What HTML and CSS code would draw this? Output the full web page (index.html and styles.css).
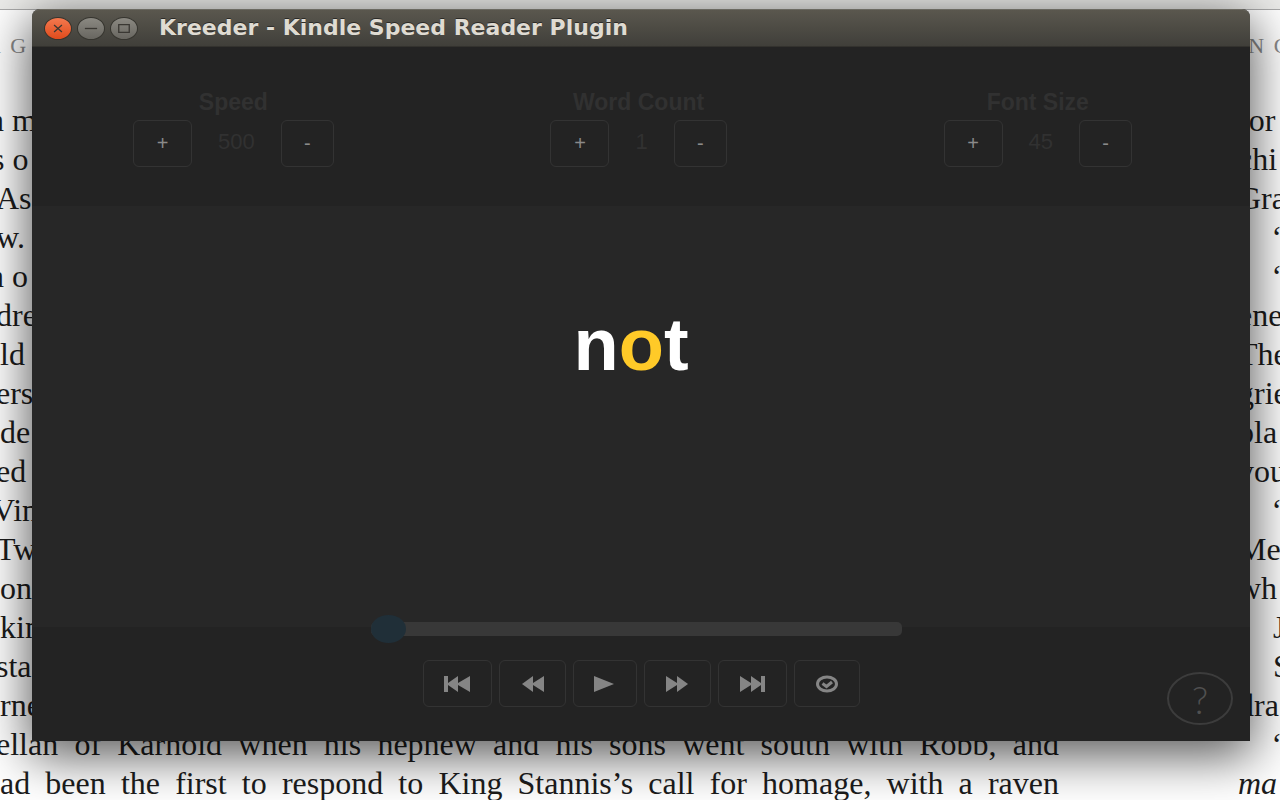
FILE: index.html
```html
<!DOCTYPE html>
<html lang="en">
<head>
<meta charset="utf-8">
<meta name="viewport" content="width=device-width, initial-scale=1">
<title>Kreeder - Kindle Speed Reader Plugin</title>
<link rel="stylesheet" href="styles.css">
</head>
<body>
<div class="desktop">
  <div class="book">
    <div class="page page-left">
      <p class="running-head">R G</p>
      <p class="in-3">n m</p>
      <p class="in-2">s o</p>
      <p class="in-1">As</p>
      <p class="in-1">w.</p>
      <p class="in-3">n o</p>
      <p class="in-1">dre</p>
      <p>ld</p>
      <p class="in-1">ers</p>
      <p>de</p>
      <p class="in-1">ed</p>
      <p class="in-2">Vin</p>
      <p class="in-1">Tw</p>
      <p>on</p>
      <p>kin</p>
      <p class="in-1">sta</p>
      <p>rne</p>
      <p class="full in-1">ellan of Karhold when his nephew and his sons went south with Robb, and</p>
      <p class="full">ad been the first to respond to King Stannis’s call for homage, with a raven</p>
    </div>
    <div class="page page-right">
      <p class="running-head">IN C</p>
      <p>for</p>
      <p>chi</p>
      <p>Gra</p>
      <p class="start">“</p>
      <p class="start">“</p>
      <p>ene</p>
      <p>The</p>
      <p>grie</p>
      <p>pla</p>
      <p>you</p>
      <p class="start">“</p>
      <p>Me</p>
      <p>wh</p>
      <p class="start">J</p>
      <p class="start">S</p>
      <p>dra</p>
      <p class="start">“</p>
      <p><em>ma</em></p>
    </div>
  </div>

  <main class="window">
    <header class="titlebar">
      <button class="wm wm-close" type="button" aria-label="Close"><svg viewBox="0 0 28 24"><path d="M9.500 8l9 8M18.500 8l-9 8"/></svg></button>
      <button class="wm" type="button" aria-label="Minimize"><svg viewBox="0 0 28 24"><path d="M7 12h14"/></svg></button>
      <button class="wm" type="button" aria-label="Maximize"><svg viewBox="0 0 28 24"><path d="M8 7.500h12v9H8z"/></svg></button>
      <h1>Kreeder - Kindle Speed Reader Plugin</h1>
    </header>

    <section class="settings">
      <div class="setting" role="group" aria-labelledby="speed">
        <h2 id="speed">Speed</h2>
        <div class="stepper"><button class="btn" type="button">+</button><output>500</output><button class="btn" type="button">-</button></div>
      </div>
      <div class="setting" role="group" aria-labelledby="count">
        <h2 id="count">Word Count</h2>
        <div class="stepper"><button class="btn" type="button">+</button><output>1</output><button class="btn" type="button">-</button></div>
      </div>
      <div class="setting" role="group" aria-labelledby="size">
        <h2 id="size">Font Size</h2>
        <div class="stepper"><button class="btn" type="button">+</button><output>45</output><button class="btn" type="button">-</button></div>
      </div>
    </section>

    <section class="reader"><p class="word">n<span>o</span>t</p></section>

    <footer class="player">
      <input class="progress" type="range" min="0" max="100" value="0" aria-label="Reading position">
      <div class="transport">
        <button class="btn" type="button" aria-label="First"><svg width="27" height="18" viewBox="0 0 27 18"><path d="M0 1h4v7l10-7v7l12-7v16L14 10v7L4 10v7H0z"/></svg></button>
        <button class="btn" type="button" aria-label="Back"><svg width="25" height="18" viewBox="0 0 25 18"><path d="M13 1v7l11-7v16l-11-7v7L2 9z"/></svg></button>
        <button class="btn" type="button" aria-label="Play"><svg width="22" height="18" viewBox="0 0 22 18"><path d="M0 1l20 8L0 17z"/></svg></button>
        <button class="btn" type="button" aria-label="Forward"><svg width="25" height="18" viewBox="0 0 25 18"><path d="M1 1l11 7V1l11 8-11 8v-7L1 17z"/></svg></button>
        <button class="btn" type="button" aria-label="Last"><svg width="27" height="18" viewBox="0 0 27 18"><path d="M1 1l11 7V1l10 7V1h4v16h-4v-7l-10 7v-7L1 17z"/></svg></button>
        <button class="btn" type="button" aria-label="Done"><svg class="line" width="24" height="18" viewBox="0 0 24 18"><ellipse cx="12" cy="9" rx="9.500" ry="7"/><path d="M7.500 8.500l4 3 5.500-4.500"/></svg></button>
      </div>
      <button class="help" type="button" aria-label="Help">?</button>
    </footer>
  </main>
</div>
</body>
</html>
```
FILE: styles.css
```css
* { box-sizing: border-box; }

body {
  margin: 0;
  background: #fff;
  font-family: "Liberation Sans", Arial, sans-serif;
}

h1, h2, p { margin: 0; }

button { font: inherit; cursor: pointer; }

.desktop {
  position: relative;
  min-height: 100vh;
  overflow: hidden;
}

/* Book behind the window */
.book {
  display: flex;
  justify-content: space-between;
  height: 100vh;
  overflow: hidden;
  border-top: 9px solid #ececea;
  box-shadow: inset 0 1px #aaa;
  color: #1c1c1c;
  font-family: "Liberation Serif", "Times New Roman", serif;
  font-size: 32px;
  line-height: 39px;
  white-space: nowrap;
}

.page { padding-top: 17px; }
.page-left { width: 1059px; }
.page-right { width: 42px; }

.running-head {
  margin-bottom: 36px;
  color: #8a8a8a;
  font-size: 22px;
  letter-spacing: 2px;
}

.page-left .running-head { text-indent: -14px; }
.page-right .running-head { text-indent: 1px; }

.full { text-align-last: justify; }
.in-1 { text-indent: -4px; }
.in-2 { text-indent: -8px; }
.in-3 { text-indent: -12px; }
.start { text-indent: 35px; }

/* Application window */
.window {
  position: absolute;
  inset: 9px 30px 59px 32px;
  display: flex;
  flex-direction: column;
  border-radius: 8px 8px 0 0;
  background: #272727;
  box-shadow: 0 12px 50px 3px rgba(0, 0, 0, 0.66);
}

.titlebar {
  display: flex;
  align-items: center;
  gap: 5px;
  height: 38px;
  padding: 0 12px;
  border-top: 1px solid #6c6a62;
  border-bottom: 1px solid #33322e;
  border-radius: 8px 8px 0 0;
  background: linear-gradient(#5a574e, #403f3a);
}

.titlebar h1 {
  margin-left: 16px;
  color: #dfdbd2;
  font-family: "DejaVu Sans", sans-serif;
  font-size: 22px;
  font-weight: 700;
  line-height: 30px;
  text-shadow: 0 -1px #2b2a27;
  white-space: nowrap;
}

.wm {
  width: 28px;
  height: 23px;
  padding: 0;
  border: 1px solid #36352f;
  border-radius: 50%;
  background: linear-gradient(#8b8982, #686660);
}

.wm-close { background: linear-gradient(#f4794f, #df4b1c); }

.wm svg {
  display: block;
  width: 100%;
  height: 100%;
  fill: none;
  stroke: #3a3833;
  stroke-width: 1.500;
}

.settings {
  display: flex;
  justify-content: space-between;
  padding: 42px 118px 39px 101px;
  background: #232323;
}

.setting h2 {
  color: #313131;
  font-size: 23px;
  line-height: 27px;
  margin-bottom: 4px;
  text-align: center;
}

.stepper {
  display: flex;
  align-items: center;
}

.stepper output {
  padding: 0 26px 3px;
  color: #313131;
  font-size: 22px;
  line-height: 44px;
}

.btn {
  display: flex;
  align-items: center;
  justify-content: center;
  height: 47px;
  padding: 0 20px;
  border: 1px solid #333;
  border-radius: 6px;
  background: transparent;
  color: #8a8a8a;
  font-size: 20px;
}

.stepper .btn { width: 59px; }
.stepper .btn:last-child { width: 53px; }

.reader {
  flex: 1;
  display: flex;
  align-items: center;
  justify-content: center;
  padding: 0 20px 144px 0;
}

.word {
  color: #fff;
  font-size: 74px;
  font-weight: 700;
  line-height: 80px;
}

.word span { color: #ffca28; }

.player {
  position: relative;
  display: flex;
  flex-direction: column;
  align-items: center;
  padding-bottom: 34px;
  background: #232323;
}

.progress {
  -webkit-appearance: none;
  appearance: none;
  width: 531px;
  height: 28px;
  margin: -12px 9px 17px 0;
  background: transparent;
}

.progress::-webkit-slider-runnable-track {
  height: 14px;
  border-radius: 5px;
  background: #383838;
}

.progress::-webkit-slider-thumb {
  -webkit-appearance: none;
  width: 35px;
  height: 28px;
  margin-top: -7px;
  border-radius: 50%;
  background: #202f38;
}

.transport {
  display: flex;
  gap: 7px;
}

.transport svg { fill: #858585; }

.transport .line {
  fill: none;
  stroke: #858585;
  stroke-width: 3;
}

.help {
  position: absolute;
  right: 17px;
  bottom: 16px;
  width: 66px;
  height: 53px;
  padding: 0;
  border: 2px solid #3c3c3c;
  border-radius: 50%;
  background: transparent;
  color: #505050;
  font-family: Lato, sans-serif;
  font-size: 38px;
  font-weight: 300;
  line-height: 44px;
}
```
